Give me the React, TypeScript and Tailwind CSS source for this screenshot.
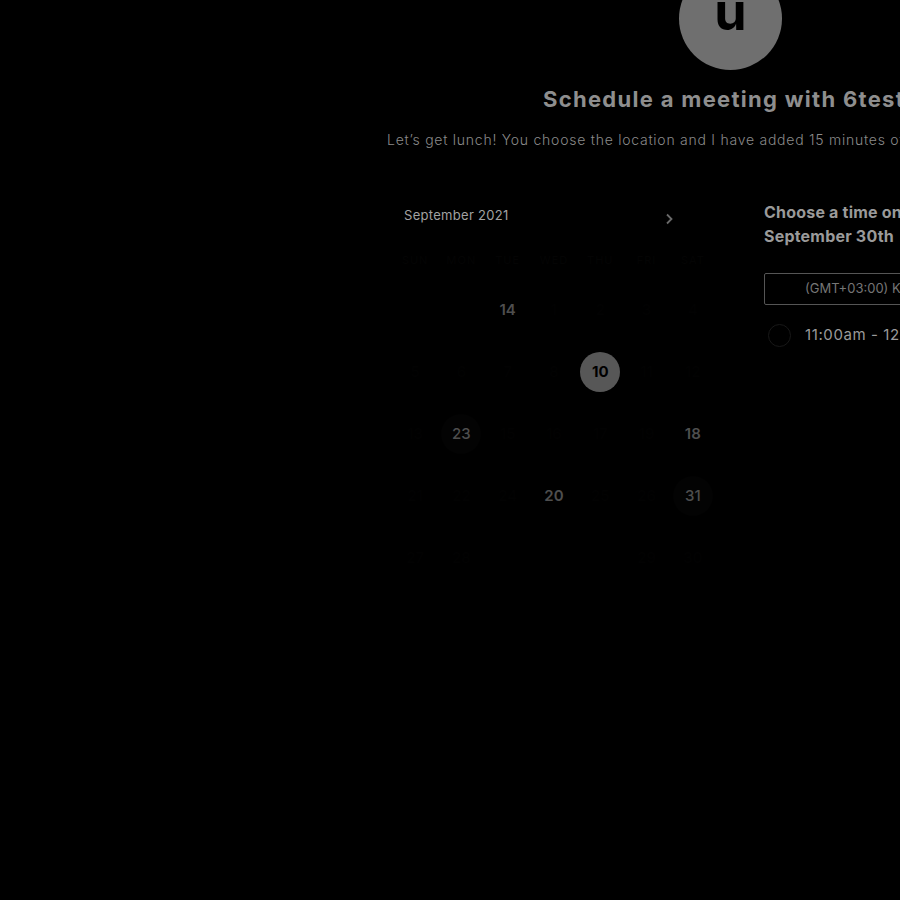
import React from 'react';

// hidden cells are rendered almost black, as in the reference
const rows: { n: string; show?: boolean; sel?: boolean; ring?: boolean }[][] = [
  [{ n: '' }, { n: '' }, { n: '14', show: true }, { n: '1' }, { n: '2' }, { n: '3' }, { n: '4' }],
  [{ n: '5' }, { n: '6' }, { n: '7' }, { n: '8' }, { n: '10', sel: true }, { n: '11' }, { n: '12' }],
  [{ n: '13' }, { n: '23', show: true, ring: true }, { n: '15' }, { n: '16' }, { n: '17' }, { n: '19' }, { n: '18', show: true }],
  [{ n: '21' }, { n: '22' }, { n: '24' }, { n: '20', show: true }, { n: '25' }, { n: '26' }, { n: '31', show: true, ring: true }],
  [{ n: '27' }, { n: '28' }, { n: '' }, { n: '' }, { n: '' }, { n: '29' }, { n: '30' }],
];

const days = ['SUN', 'MON', 'TUE', 'WED', 'THU', 'FRI', 'SAT'];

const App: React.FC = () => {
  return (
    <div className="w-[900px] h-[900px] overflow-hidden bg-black" style={{ fontFamily: 'Inter, "Liberation Sans", sans-serif' }}>
      <div className="w-[1400px] flex flex-col items-start -mt-[33px]">
        {/* avatar */}
        <div className="ml-[679px] w-[103px] h-[103px] rounded-full bg-[#6f6f6f] flex items-center justify-center">
          <span className="text-[52px] font-bold text-black leading-none -mt-[14px]">u</span>
        </div>

        <h1 className="ml-[543px] mt-[13px] text-[22px] font-bold text-[#8e8e8e] whitespace-nowrap tracking-[1.3px]">
          Schedule a meeting with 6testuser
        </h1>
        <p className="ml-[387px] mt-[13px] text-[14px] font-light text-[#8a8a8a] whitespace-nowrap tracking-[0.75px]">
          Let’s get lunch! You choose the location and I have added 15 minutes of travel time to the event.
        </p>

        <div className="ml-[392px] mt-[50px] flex items-start gap-[48px]">
          {/* calendar */}
          <div className="w-[324px] pt-[6px]">
            <div className="flex items-center justify-between pl-[12px] pr-[42px]">
              <span className="text-[13px] text-[#a2a2a2] tracking-[0.3px]">September 2021</span>
              <svg width="10" height="12" viewBox="0 0 10 12" className="mt-[6px]">
                <path d="M3 1.5 L7.5 6 L3 10.5" fill="none" stroke="#6a6a6a" strokeWidth="1.8" />
              </svg>
            </div>
            <div className="grid grid-cols-7 mt-[26px]">
              {days.map((d) => (
                <div key={d} className="text-center text-[11px] text-[#040404] tracking-[1px]">{d}</div>
              ))}
            </div>
            <div className="mt-[22px] flex flex-col gap-[22px]">
              {rows.map((r, i) => (
                <div key={i} className="grid grid-cols-7">
                  {r.map((c, j) => (
                    <div key={j} className="flex justify-center">
                      <div
                        className={`w-[40px] h-[40px] rounded-full flex items-center justify-center text-[15px] ${
                          c.sel
                            ? 'bg-[#575757] text-black font-bold'
                            : c.ring
                            ? 'bg-[#030303] text-[#4e4e4e] font-medium'
                            : c.show
                            ? 'text-[#4e4e4e] font-semibold'
                            : 'text-[#020202] font-medium'
                        }`}
                      >
                        {c.n}
                      </div>
                    </div>
                  ))}
                </div>
              ))}
            </div>
          </div>

          {/* times */}
          <div className="w-[300px]">
            <div className="text-[16px] font-bold text-[#9a9a9a] leading-[24px] tracking-[0.2px]">
              Choose a time on
              <br />
              September 30th
            </div>
            <div className="mt-[25px] h-[32px] w-[260px] border border-[#555555] rounded-[2px] flex items-center pl-[40px]">
              <span className="text-[13px] text-[#757575] whitespace-nowrap">(GMT+03:00) Kuwait, Riyadh</span>
            </div>
            <div className="mt-[19px] flex items-center gap-[14px] pl-[4px]">
              <div className="w-[23px] h-[23px] rounded-full border border-[#181818]" />
              <span className="text-[15px] text-[#9a9a9a] tracking-[0.6px]">11:00am - 12:00pm</span>
            </div>
          </div>
        </div>
      </div>
    </div>
  );
};

export default App;
